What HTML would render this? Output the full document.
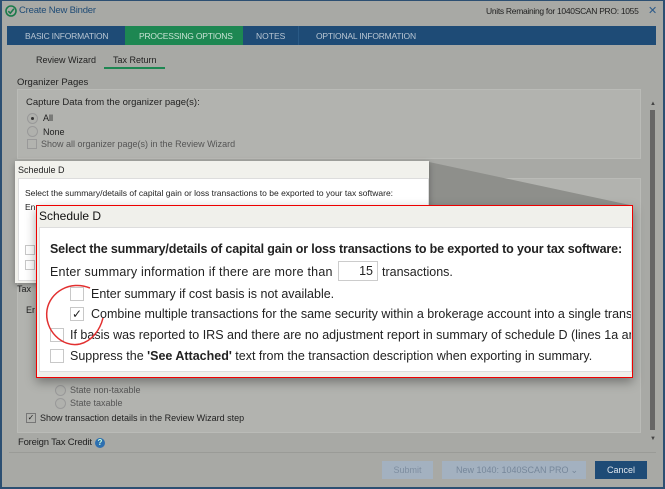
<!DOCTYPE html>
<html><head><meta charset="utf-8"><style>
*{margin:0;padding:0;box-sizing:border-box}
body{width:665px;height:489px;overflow:hidden;font-family:"Liberation Sans",sans-serif;background:#a8a9a5;position:relative;color:#222}
.a{position:absolute;white-space:nowrap}
.frame{position:absolute;left:0;top:0;width:665px;height:489px;border:2px solid #2c4f72;border-top:1px solid #2c4f72}
.cb{position:absolute;width:13px;height:13px;border:1px solid #c8c8c8;background:#fff}
.rd{position:absolute;width:11px;height:11px;border-radius:50%;border:1px solid #999;background:#b0b1ad}
</style></head><body>
<div class="frame"></div>
<svg class="a" style="left:5px;top:5px" width="12" height="12" viewBox="0 0 12 12"><circle cx="6" cy="6" r="5" fill="none" stroke="#1a7a4a" stroke-width="1.6"/><path d="M3.3 6.2l2 2 3.6-4.4" fill="none" stroke="#1a7a4a" stroke-width="1.6"/></svg>
<div class="a" style="left:19px;top:5px;font-size:9.5px;color:#1f4b75;letter-spacing:-.2px">Create New Binder</div>
<div class="a" style="left:486px;top:6px;font-size:8.5px;color:#222;letter-spacing:-.3px">Units Remaining for 1040SCAN PRO: 1055</div>
<div class="a" style="left:648px;top:4px;font-size:11px;color:#2c5a8a">✕</div>
<div class="a" style="left:7px;top:26px;width:649px;height:19px;background:#1e4b76"></div>
<div class="a" style="left:125px;top:26px;width:118px;height:19px;background:#1d8752"></div>
<div class="a" style="left:25px;top:31px;font-size:8.5px;color:#b9c6d3;letter-spacing:-.2px">BASIC INFORMATION</div>
<div class="a" style="left:139px;top:31px;font-size:8.5px;color:#c7e2d3;letter-spacing:-.2px">PROCESSING OPTIONS</div>
<div class="a" style="left:256px;top:31px;font-size:8.5px;color:#b9c6d3">NOTES</div>
<div class="a" style="left:298px;top:26px;width:1px;height:19px;background:#2a5a86"></div>
<div class="a" style="left:316px;top:31px;font-size:8.5px;color:#b9c6d3;letter-spacing:-.2px">OPTIONAL INFORMATION</div>
<div class="a" style="left:36px;top:55px;font-size:9px">Review Wizard</div>
<div class="a" style="left:113px;top:55px;font-size:9px">Tax Return</div>
<div class="a" style="left:104px;top:67px;width:61px;height:2px;background:#1d8752"></div>
<div class="a" style="left:17px;top:77px;font-size:9.5px">Organizer Pages</div>
<div class="a" style="left:17px;top:89px;width:624px;height:70px;background:#b2b3af;border:1px solid #babbb7"></div>
<div class="a" style="left:26px;top:97px;font-size:9.5px">Capture Data from the organizer page(s):</div>
<div class="rd" style="left:27px;top:113px"></div><div class="a" style="left:31px;top:117px;width:3px;height:3px;background:#333;border-radius:50%"></div>
<div class="a" style="left:43px;top:113px;font-size:9px">All</div>
<div class="rd" style="left:27px;top:126px"></div>
<div class="a" style="left:43px;top:127px;font-size:9px">None</div>
<div class="a" style="left:27px;top:139px;width:10px;height:10px;border:1px solid #999"></div>
<div class="a" style="left:41px;top:139px;font-size:9px;color:#555">Show all organizer page(s) in the Review Wizard</div>
<div class="a" style="left:17px;top:178px;width:624px;height:255px;background:#b2b3af;border:1px solid #babbb7"></div>
<div class="a" style="left:650px;top:110px;width:5px;height:320px;background:#666"></div>
<div class="a" style="left:650px;top:101px;font-size:6px;color:#444">▲</div>
<div class="a" style="left:650px;top:436px;font-size:6px;color:#444">▼</div>
<div class="a" style="left:17px;top:284px;font-size:9px">Tax</div>
<div class="a" style="left:26px;top:305px;font-size:9px">Er</div>
<div class="rd" style="left:55px;top:385px"></div><div class="a" style="left:70px;top:385px;font-size:9px;color:#555">State non-taxable</div>
<div class="rd" style="left:55px;top:398px"></div><div class="a" style="left:70px;top:398px;font-size:9px;color:#555">State taxable</div>
<div class="a" style="left:26px;top:413px;width:10px;height:10px;border:1px solid #777;font-size:8px;line-height:8px;text-align:center">✓</div>
<div class="a" style="left:40px;top:413px;font-size:9px">Show transaction details in the Review Wizard step</div>
<div class="a" style="left:18px;top:437px;font-size:9.5px;letter-spacing:-.2px">Foreign Tax Credit</div>
<div class="a" style="left:95px;top:438px;width:10px;height:10px;border-radius:50%;background:#2d6fb0;color:#cfd;font-size:8px;line-height:10px;text-align:center;font-weight:bold">?</div>
<div class="a" style="left:9px;top:452px;width:647px;height:1px;background:#9a9b97"></div>
<div class="a" style="left:382px;top:461px;width:51px;height:18px;background:#a3b1c0;color:#7e8ea0;font-size:9px;text-align:center;line-height:18px">Submit</div>
<div class="a" style="left:442px;top:461px;width:144px;height:18px;background:#a3b1c0;color:#76879a;font-size:9px;line-height:18px;padding-left:14px">New 1040: 1040SCAN PRO <span style="position:absolute;right:8px">⌄</span></div>
<div class="a" style="left:595px;top:461px;width:52px;height:18px;background:#1e4b76;color:#dfe6ee;font-size:9px;text-align:center;line-height:18px">Cancel</div>
<svg class="a" style="left:0;top:0" width="665" height="489"><polygon points="429,162 630,205 429,205" fill="#8e8f8b"/></svg>
<div class="a" style="left:15px;top:161px;width:414px;height:122px;background:#f1f1ec;box-shadow:0 2px 6px rgba(0,0,0,.3)">
<div class="a" style="left:3px;top:4px;font-size:9px">Schedule D</div>
<div class="a" style="left:3px;top:17px;width:411px;height:103px;background:#fff;border:1px solid #ddd"></div>
<div class="a" style="left:10px;top:27px;font-size:8.5px">Select the summary/details of capital gain or loss transactions to be exported to your tax software:</div>
<div class="a" style="left:10px;top:41px;font-size:8.5px">En</div>
<div class="cb" style="left:10px;top:84px;width:10px;height:10px"></div>
<div class="cb" style="left:10px;top:99px;width:10px;height:10px"></div>
</div>
<div class="a" style="left:36px;top:205px;width:597px;height:173px;background:#f0f0eb;border:1px solid #e00;box-shadow:0 4px 10px rgba(0,0,0,.35)">
<div class="a" style="left:2px;top:3px;font-size:12px;color:#111">Schedule D</div>
<div class="a" style="left:2px;top:21px;width:593px;height:145px;background:#fff;border:1px solid #ddd;overflow:hidden">
<div class="a" style="left:10px;top:14px;font-size:12.5px;font-weight:bold;letter-spacing:-.15px">Select the summary/details of capital gain or loss transactions to be exported to your tax software:</div>
<div class="a" style="left:10px;top:37px;font-size:12.5px;letter-spacing:.2px">Enter summary information if there are more than</div>
<div class="a" style="left:298px;top:33px;width:40px;height:20px;border:1px solid #ccc;font-size:12.5px;text-align:right;padding-right:4px;line-height:18px">15</div>
<div class="a" style="left:342px;top:37px;font-size:12.5px">transactions.</div>
<div class="cb" style="left:30px;top:59px;width:14px;height:14px"></div>
<div class="a" style="left:51px;top:59px;font-size:12.5px">Enter summary if cost basis is not available.</div>
<div class="cb" style="left:30px;top:79px;width:14px;height:14px;font-size:12px;line-height:12px;text-align:center">✓</div>
<div class="a" style="left:51px;top:79px;font-size:12.5px">Combine multiple transactions for the same security within a brokerage account into a single transaction</div>
<div class="cb" style="left:10px;top:100px;width:14px;height:14px"></div>
<div class="a" style="left:30px;top:100px;font-size:12.5px">If basis was reported to IRS and there are no adjustment report in summary of schedule D (lines 1a and 8a)</div>
<div class="cb" style="left:10px;top:121px;width:14px;height:14px"></div>
<div class="a" style="left:30px;top:121px;font-size:12.5px">Suppress the <b>'See Attached'</b> text from the transaction description when exporting in summary.</div>
</div></div>
<svg class="a" style="left:0;top:0" width="665" height="489"><path d="M90 288 C70 280,50 292,47 310 C44 330,62 348,80 344 C92 341,100 330,103 318" fill="none" stroke="#e23030" stroke-width="1.5"/></svg>
</body></html>
